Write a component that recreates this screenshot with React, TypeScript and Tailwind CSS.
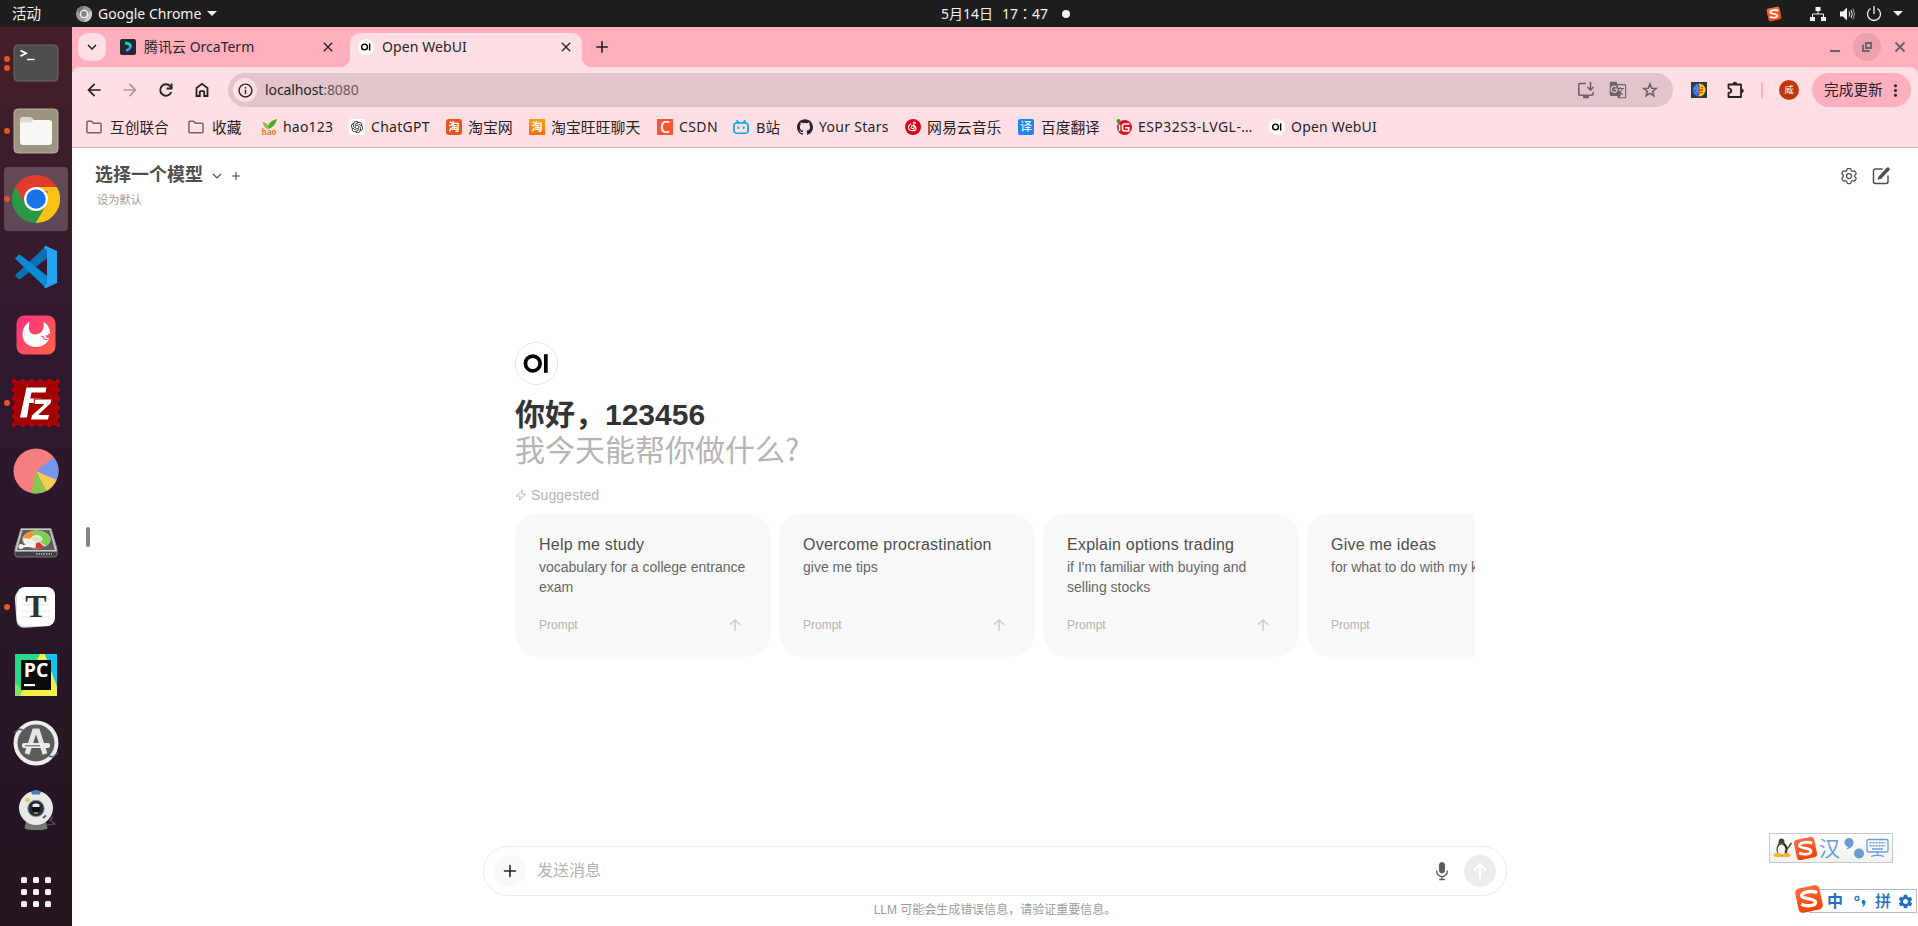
import type { ReactNode } from "react";
import {
  MdArrowBack,
  MdArrowForward,
  MdInfoOutline,
  MdGTranslate,
  MdMoreVert,
  MdClose,
  MdAdd,
  MdKeyboardArrowDown,
  MdSettings,
} from "react-icons/md";
import { SiOpenai, SiGithub, SiBilibili } from "react-icons/si";
import { HiOutlineCog6Tooth } from "react-icons/hi2";

const UI = "font-['Noto_Sans','Noto_Sans_CJK_SC',sans-serif]";

/* ---------- shared marks ---------- */

function OiMark({ className }: { className: string }) {
  return (
    <svg viewBox="0 0 44 44" className={className}>
      <circle cx="22" cy="22" r="22" fill="#fff" />
      <circle cx="18" cy="22" r="7.900" fill="none" stroke="#000" strokeWidth="4" />
      <rect x="30" y="12" width="4" height="20" fill="#000" />
    </svg>
  );
}

function SogouMark({ className }: { className: string }) {
  return (
    <svg viewBox="0 0 28 28" className={className}>
      <defs>
        <linearGradient id="sogou" x1="0" y1="0" x2="0" y2="1">
          <stop offset="0" stopColor="#ff6a3c" />
          <stop offset="1" stopColor="#f04208" />
        </linearGradient>
      </defs>
      <rect x="2.500" y="2.500" width="23" height="23" rx="4" fill="url(#sogou)" transform="rotate(-12 14 14)" />
      <path
        d="M21.500 8.200C17 6 8 7 7.200 10.600c-.7 3.600 12.800 2.400 12.900 6.400 0 3.600-9 4.400-13.300 1.800"
        fill="none"
        stroke="#fff"
        strokeWidth="3.200"
      />
    </svg>
  );
}

/* ---------- dock ---------- */

const terminalIcon = (
  <>
    <rect x="2" y="6" width="44" height="36" rx="4" fill="#4d4d4c" stroke="#6b6b69" />
    <path d="M8.500 11.500l5.500 2.800-5.500 2.800" fill="none" stroke="#fff" strokeWidth="1.800" />
    <path d="M15 20.500h7.500" stroke="#fff" strokeWidth="1.500" />
  </>
);

const filesIcon = (
  <>
    <rect x="2" y="2" width="44" height="44" rx="4" fill="#9c9480" stroke="#b8b09c" />
    <path d="M8 18v-6q0-2 2-2h8q1.500 0 2.500 1.500L22 13v6z" fill="#dedad0" />
    <path d="M8 15.500h11l2.500-2.500H37q3 0 3 3v19q0 3-3 3H11q-3 0-3-3z" fill="#f8f7f5" />
  </>
);

const chromeIcon = (
  <>
    <path d="M24 24L3.200 12A24 24 0 0 1 44.800 12z" fill="#e33b2e" />
    <path d="M24 24L44.800 12A24 24 0 0 1 24 48z" fill="#fbc116" />
    <path d="M24 24L24 48A24 24 0 0 1 3.200 12z" fill="#2a9a49" />
    <path d="M24 12h20.800l-6 6z" fill="#fbc116" />
    <path d="M34.400 30L24 48l-6-14z" fill="#2a9a49" />
    <path d="M34.400 30L24 48h2l14-12z" fill="#fbc116" />
    <path d="M13.600 30L3.200 12l12-2z" fill="#e33b2e" />
    <path d="M3.200 12l10.400 18-8-4z" fill="#2a9a49" />
    <circle cx="24" cy="24" r="12" fill="#fff" />
    <circle cx="24" cy="24" r="9.700" fill="#1a73e8" />
  </>
);

const vscodeIcon = (
  <>
    <path d="M3 32.500l3.500 3.500q1 .8 2 0L36 14.500 34 3z" fill="#0b6fb8" />
    <path d="M3 15.500l3.500-3.500q1-.8 2 0L36 33.500 34 45z" fill="#0a8bd8" />
    <path d="M34 3l11 5v32l-11 5q-1 .3-2-1l3-4V8l-3-4q1-1.300 2-1z" fill="#23a5f1" />
  </>
);

const crabIcon = (
  <>
    <defs>
      <linearGradient id="crab" x1="0" y1="0" x2="1" y2="1">
        <stop offset="0" stopColor="#ff2f83" />
        <stop offset="1" stopColor="#fb6444" />
      </linearGradient>
    </defs>
    <rect x="4.500" y="4.500" width="39" height="39" rx="8" fill="url(#crab)" />
    <path
      d="M17.500 11c-2 9 1 12.500 5.500 12.500s10-3.500 8.500-12.500c4 2 6.500 6 6.500 12l-2.500-.5 1 2-3-.5 1 2.500 2.500 1c-2 5.500-7 8.500-13.500 8.500s-13-5-13-12c0-6.500 3-11 7-13z"
      fill="#fff"
    />
    <path d="M29 25l3 1-.5 2 4 .5" fill="none" stroke="#f9476b" strokeWidth="1" />
  </>
);

const filezillaIcon = (
  <>
    <rect x="2" y="2" width="44" height="44" fill="#a30000" />
    <rect x="2" y="2" width="44" height="44" fill="none" stroke="#b50000" strokeWidth="4.500" strokeDasharray="0.100 8.700" strokeLinecap="round" />
    <path d="M14.500 8.500h20l-1 5H19.500l-1.200 6h11l-1 4.500h-11L15 38.500H8z" fill="#fff" />
    <path d="M22.500 20h17.500l-1 4.500-12 11h10.500l-1 5.500H18.500l1-4.500 12-11h-9.500z" fill="#fff" stroke="#9a0000" strokeWidth="1" />
  </>
);

const pieIcon = (
  <>
    <circle cx="24" cy="24" r="22.500" fill="#f67e7e" />
    <path d="M24 24L42 10.500A22.500 22.500 0 0 1 44.500 33z" fill="#7397ee" />
    <path d="M24 24L44.500 33A22.500 22.500 0 0 1 34.500 44z" fill="#f7cc52" />
    <path d="M24 24L34.500 44A22.500 22.500 0 0 1 19 46z" fill="#8bc551" />
  </>
);

const diskIcon = (
  <g transform="translate(0 7.500)">
    <path d="M9 6h30l6 20.500q.5 4.500-2 4.500H5q-2.500 0-2-4.500z" fill="#cfcfca" stroke="#8a8a86" />
    <path d="M10.500 7.500h27l5.500 20H5z" fill="#5c5f60" />
    <path d="M3 29h42v3q0 2.500-3 2.500H6q-3 0-3-2.500z" fill="#3f4243" stroke="#8c8f90" strokeWidth=".8" />
    <ellipse cx="24.500" cy="17" rx="14" ry="9" fill="#efefec" stroke="#999" strokeWidth=".8" />
    <path d="M24.500 17L20 8.500a14 9 0 0 1 14 15z" fill="#82cf4e" />
    <path d="M24.500 17L20 8.500q-7 2-9 7z" fill="#f8922c" />
    <path d="M24.500 17l8 7.500q-4 2-9 1.500z" fill="#dc2f36" />
    <ellipse cx="24.500" cy="16.500" rx="5.500" ry="3.300" fill="#cfe9bd" stroke="#fff" />
    <circle cx="9" cy="24" r="2.500" fill="#f2f2f2" />
    <path d="M9 24l13-1" stroke="#fff" strokeWidth="1.800" />
    <path d="M24 31.500h16" stroke="#9b9e9f" strokeWidth="2" strokeDasharray="1.500 1" />
  </g>
);

const typoraIcon = (
  <>
    <rect x="3.500" y="6" width="38" height="38" rx="8" fill="#ddd" transform="rotate(-4 24 24)" />
    <rect x="5" y="4" width="38" height="39" rx="8" fill="#fff" />
    <path d="M10 16h28M10 22h28M10 28h28M10 34h28" stroke="#e6e6e6" strokeWidth="1.200" />
    <text x="24" y="34" textAnchor="middle" fontFamily="Liberation Serif" fontWeight="700" fontSize="32" fill="#2f3336">
      T
    </text>
  </>
);

const pycharmIcon = (
  <>
    <rect x="3" y="3" width="42" height="42" fill="#27d889" />
    <path d="M3 31l12 14H3z" fill="#7be35c" />
    <path d="M31 3h14v30L34 20z" fill="#13c5ec" />
    <path d="M28 3h5l12 32v10H8z" fill="#f4ee45" />
    <path d="M33 3h12v32z" fill="#13c5ec" />
    <rect x="9" y="9" width="30" height="30" fill="#0b0b0b" />
    <text x="24" y="26" textAnchor="middle" fontFamily="Open Sans" fontWeight="700" fontSize="19.500" fill="#fff">
      PC
    </text>
    <rect x="12" y="33" width="11" height="2.200" fill="#fff" />
  </>
);

const softwareIcon = (
  <>
    <circle cx="24" cy="24" r="20.500" fill="#5b5b5b" stroke="#ececec" strokeWidth="4" />
    <path d="M2 14l5-4 4 1M46 34l-5 4-4-1" stroke="#5b5b5b" strokeWidth="1.500" fill="none" />
    <path d="M15 35l7.500-23h3L33 35" fill="none" stroke="#e6e6e6" strokeWidth="5" />
    <rect x="10" y="24" width="28" height="5" rx="2" fill="#ececec" />
    <path d="M13 26.800h15" stroke="#6a4a68" strokeWidth="1" />
  </>
);

const webcamIcon = (
  <g transform="translate(0 -2)">
    <path d="M14 37h20l1.500 6q-1 2-11.500 2t-11.500-2z" fill="#74787a" />
    <path d="M34 40l9-1-5-4 3-3" stroke="#55585a" strokeWidth="1.200" fill="none" />
    <circle cx="24" cy="23" r="17" fill="#e9e9e9" />
    <path d="M19 6.500q5-3 10 0l-1 3h-8z" fill="#4a7cc2" />
    <circle cx="15.500" cy="15" r="2.300" fill="#d2db2e" />
    <circle cx="24" cy="23.500" r="8.200" fill="#232c38" stroke="#8a929b" strokeWidth="1" />
    <circle cx="24" cy="23.500" r="4" fill="#0b0d11" />
    <path d="M20.500 19.500q3.500-2 7 0v2.500h-7z" fill="#e9edf2" />
    <path d="M22 28h4" stroke="#b8a83a" strokeWidth="1.500" />
    <path d="M31 33l3-2.500" stroke="#555" strokeWidth="1.800" />
  </g>
);

const DOCK: { icon: ReactNode; dots: number; active?: boolean }[] = [
  { icon: terminalIcon, dots: 2 },
  { icon: filesIcon, dots: 1 },
  { icon: chromeIcon, dots: 1, active: true },
  { icon: vscodeIcon, dots: 0 },
  { icon: crabIcon, dots: 0 },
  { icon: filezillaIcon, dots: 1 },
  { icon: pieIcon, dots: 0 },
  { icon: diskIcon, dots: 0 },
  { icon: typoraIcon, dots: 1 },
  { icon: pycharmIcon, dots: 0 },
  { icon: softwareIcon, dots: 0 },
  { icon: webcamIcon, dots: 0 },
];

function Dock() {
  return (
    <nav className="flex h-full w-[72px] shrink-0 flex-col items-center bg-linear-to-b from-[#451f28] via-[#2f182e] via-35% to-[#241520] pt-0.5">
      {DOCK.map((item, i) => (
        <div key={i} className="flex h-[68px] w-full shrink-0 items-center">
          <div className="z-10 flex w-3 flex-col items-end gap-[3px] pr-0.5">
            {Array.from({ length: item.dots }, (_, d) => (
              <span key={d} className="size-1.5 rounded-full bg-[#e95420]" />
            ))}
          </div>
          <div
            className={
              item.active
                ? "-ml-2 flex size-16 items-center justify-center rounded bg-white/20"
                : "-ml-2 flex size-16 items-center justify-center"
            }
          >
            <svg viewBox="0 0 48 48" className="size-12">
              {item.icon}
            </svg>
          </div>
        </div>
      ))}
      <div className="mt-8 grid grid-cols-3 gap-1.5">
        {Array.from({ length: 9 }, (_, i) => (
          <span key={i} className="size-1.5 rounded-[1.5px] bg-[#f2f0f2]" />
        ))}
      </div>
    </nav>
  );
}

/* ---------- system bar ---------- */

function TopBar() {
  return (
    <header className="relative flex h-[27px] shrink-0 items-center bg-[#1d1d1d] text-[14.500px] text-[#f2f2f2]">
      <span className="w-[63px] pl-3">活动</span>
      <svg viewBox="0 0 16 16" className="ml-[13px] size-4">
        <circle cx="8" cy="8" r="8" fill="#9b9b9b" />
        <path d="M8 0a8 8 0 0 0-7 4l4 6z" fill="#777" />
        <path d="M15 4a8 8 0 0 1-7 12l3-6z" fill="#c9c9c9" />
        <circle cx="8" cy="8" r="3.600" fill="#858585" stroke="#f4f4f4" strokeWidth="1.400" />
      </svg>
      <span className="ml-1.5 w-[109px] text-[14px] whitespace-nowrap">Google Chrome</span>
      <svg viewBox="0 0 10 5" className="h-[5px] w-[10px]">
        <path d="M0 0h10L5 5z" fill="#f2f2f2" />
      </svg>
      <div className="absolute inset-y-0 left-[941px] flex items-center">
        <span className="flex w-[121px] items-center text-[14px]">
          <span className="w-[61px] whitespace-nowrap">5月14日</span>
          <span className="whitespace-nowrap">17</span>
          <span className="w-[14px] font-['Noto_Sans_CJK_TC']">：</span>
          <span>47</span>
        </span>
        <span className="size-2 rounded-full bg-[#f2f2f2]" />
      </div>
      <div className="ml-auto flex items-center pr-[15px]">
        <SogouMark className="mr-[28px] size-4" />
        <svg viewBox="0 0 16 16" className="mr-[13px] size-4" fill="#f2f2f2">
          <path d="M5.500 1h5v4h-5zM0 11h5v4H0zM11 11h5v4h-5z" />
          <path d="M8 5v3M2.500 11V8h11v3" fill="none" stroke="#f2f2f2" />
        </svg>
        <svg viewBox="0 0 16 16" className="mr-[11px] size-4" fill="#f2f2f2">
          <path d="M1 5.500h3L8 1.500v13L4 10.500H1z" />
          <path d="M10 5.500q1.500 2.500 0 5M12 4q2.500 4 0 8" fill="none" stroke="#f2f2f2" />
          <path d="M14 2.500q3 5.500 0 11" fill="none" stroke="#999" />
        </svg>
        <svg viewBox="0 0 16 16" className="mr-[11px] size-4" fill="none" stroke="#f2f2f2" strokeWidth="1.300">
          <path d="M8 0v8M4.500 2.500a6.500 6.500 0 1 0 7 0" />
        </svg>
        <svg viewBox="0 0 10 5" className="h-[5px] w-[10px]">
          <path d="M0 0h10L5 5z" fill="#f2f2f2" />
        </svg>
      </div>
    </header>
  );
}

/* ---------- browser chrome ---------- */

function TabStrip() {
  return (
    <div className="flex h-10 items-center bg-[#ffafbd] pl-1.5 text-[14px] text-[#262326]">
      <div className="flex size-7 items-center justify-center rounded-[10px] bg-[#ffdfe4]">
        <MdKeyboardArrowDown className="size-[18px]" />
      </div>
      <div className="flex h-[34px] w-[244px] items-center pl-3.5">
        <svg viewBox="0 0 16 16" className="size-4">
          <rect width="16" height="16" rx="2" fill="#24292f" />
          <path d="M5 4q6 .5 5.500 4" fill="none" stroke="#16d7a6" strokeWidth="2.800" />
          <path d="M10.500 7.500q-1 3.500-4.500 4" fill="none" stroke="#5d8bf5" strokeWidth="2.500" />
        </svg>
        <span className="ml-2 w-[176px] pb-0.5 whitespace-nowrap">腾讯云 OrcaTerm</span>
        <MdClose className="size-4 shrink-0" />
      </div>
      <div className="relative mt-1.5 flex h-[34px] w-[232px] items-center rounded-t-[10px] bg-[#ffdfe4] pl-2">
        <span className="absolute bottom-0 -left-2.5 size-2.5 bg-[radial-gradient(circle_at_0_0,transparent_10px,#ffdfe4_10.500px)]" />
        <span className="absolute -right-2.5 bottom-0 size-2.5 bg-[radial-gradient(circle_at_100%_0,transparent_10px,#ffdfe4_10.500px)]" />
        <div className="-mt-1.5 flex items-center">
          <OiMark className="size-4" />
          <span className="ml-2 w-[176px] pb-0.5 tracking-[0.100px] whitespace-nowrap">Open WebUI</span>
          <MdClose className="size-4 shrink-0" />
        </div>
      </div>
      <MdAdd className="ml-2.5 size-5" />
      <div className="ml-auto flex items-center pr-[10px] text-[#6b6266]">
        <span className="mt-2 mr-[13px] h-0.5 w-2.5 bg-[#6b6266]" />
        <div className="mr-[11px] flex size-7 items-center justify-center rounded-full bg-[#eba1ae]">
          <svg viewBox="0 0 10 10" className="size-2.5" fill="none" stroke="#6b6266" strokeWidth="1.800">
            <path d="M4 1h5v5H4zM1 2.500V9h6.500" />
          </svg>
        </div>
        <svg viewBox="0 0 16 16" className="size-4" stroke="currentColor" strokeWidth="1.900">
          <path d="M3.500 3.500l9 9M12.500 3.500l-9 9" />
        </svg>
      </div>
    </div>
  );
}

function Toolbar() {
  return (
    <div className="bg-[#ffafbd]">
      <div className="flex h-[46px] items-center rounded-t-lg bg-[#ffdfe4] pr-[7px] pl-3 text-[#262326]">
        <MdArrowBack className="size-5" />
        <MdArrowForward className="ml-4 size-5 text-[#a8949a]" />
        <svg viewBox="0 0 20 20" className="ml-4 size-5" fill="none" stroke="currentColor" strokeWidth="1.900">
          <path d="M15.300 12A5.700 5.700 0 1 1 14.300 6.300L16 8" />
          <path d="M15.500 3.500v5h-5" />
        </svg>
        <svg viewBox="0 0 20 20" className="ml-4 size-5" fill="none" stroke="currentColor" strokeWidth="1.800">
          <path d="M4.500 16V8L10 3.800 15.500 8v8h-3.300v-4q0-.8-.8-.8H8.600q-.8 0-.8.8v4z" />
        </svg>
        <div className="ml-4 flex h-[34px] w-[1445px] items-center rounded-full bg-[#e1c5ca] pr-3.5 pl-[5px] text-[14px]">
          <span className="flex size-6 items-center justify-center rounded-full bg-[#ffdfe4]">
            <MdInfoOutline className="size-[17px]" />
          </span>
          <span className="ml-2 pb-0.5 tracking-[-0.100px]">
            localhost<span className="text-[#675a5e]">:8080</span>
          </span>
          <div className="ml-auto flex items-center gap-3.5 text-[#6f6367]">
            <svg viewBox="0 0 18 18" className="size-[18px]" fill="none" stroke="currentColor" strokeWidth="1.600">
              <path d="M9 2.500H3q-1.200 0-1.200 1.200V13q0 1.200 1.200 1.200h12q1.200 0 1.200-1.200v-2" />
              <path d="M13.500 1v7.500M10.500 6l3 3 3-3" />
              <path d="M6 16h6" strokeWidth="2.500" />
            </svg>
            <MdGTranslate className="size-[18px]" />
            <svg viewBox="0 0 18 18" className="size-[18px]" fill="none" stroke="currentColor" strokeWidth="1.600">
              <path d="M9 3l1.700 4.200 4.500.3-3.500 2.900 1.200 4.400L9 12.400l-3.900 2.400 1.200-4.400-3.500-2.900 4.500-.3z" />
            </svg>
          </div>
        </div>
        <svg viewBox="0 0 16 16" className="ml-[18px] size-4">
          <rect width="16" height="16" fill="#38363c" />
          <path d="M8 1.500a6.500 6.500 0 0 0 0 13z" fill="#2374ee" />
          <path d="M8 1.500a6.500 6.500 0 0 1 0 13z" fill="#f7d21c" />
          <path d="M3 6l5 2M4 11l4-3M5 3l3 5" stroke="#5fd0ff" strokeWidth=".7" />
          <path d="M8 3v10M8 8h4M10 5l2 1M9 10l3 1" stroke="#e03a2a" strokeWidth="1.300" />
        </svg>
        <svg viewBox="0 0 20 20" className="ml-[18px] size-5" fill="none" stroke="currentColor" strokeWidth="1.800">
          <path d="M3.500 4.500H16V17H3.500v-4q2.800-.3 2.800-2.300T3.500 8.300z" strokeLinejoin="round" />
          <path d="M7.800 4.200a2.100 2.200 0 0 1 4.200 0zM16.300 8.700a2.200 2.100 0 0 1 0 4.200z" fill="currentColor" strokeWidth=".6" />
        </svg>
        <span className="ml-4 h-4 w-0.5 bg-[#ffafbd]" />
        <span className="ml-4 flex size-5 items-center justify-center rounded-full bg-[#bf360c] text-[9px] text-white">威</span>
        <div className="ml-auto flex h-[34px] w-[99px] items-center rounded-full bg-[#ffafbd] pl-3 text-[14.700px] whitespace-nowrap">
          <span className="pb-px">完成更新</span>
          <MdMoreVert className="ml-[3px] size-[19px] shrink-0" />
        </div>
      </div>
    </div>
  );
}

const folder = (
  <svg viewBox="0 0 17 14" className="h-3.5 w-[17px]" fill="none" stroke="#6f6367" strokeWidth="1.600" strokeLinejoin="round">
    <path d="M1 2q0-1 1-1h4l2 2h7q1 0 1 1v8q0 1-1 1H2q-1 0-1-1z" />
  </svg>
);

function TileGlyph({ className, children }: { className: string; children: ReactNode }) {
  return <span className={className}>{children}</span>;
}

const BOOKMARKS: { icon: ReactNode; label: string; cell: string; text: string }[] = [
  { icon: folder, label: "互创联合", cell: "w-[102px]", text: "text-[14.700px] pl-2" },
  { icon: folder, label: "收藏", cell: "w-[73px]", text: "text-[14.700px] pl-2" },
  {
    icon: (
      <svg viewBox="0 0 16 16" className="size-4">
        <path d="M2 3.500q3.500 0 5 3.500 2-5.500 9-7-1 6.500-8 10Q3 9 2 3.500z" fill="#4faa2f" />
        <path d="M2 3.500q3.500 0 5 3.500l1 3Q3 9 2 3.500z" fill="#8bc53f" />
        <text x="8" y="15.500" textAnchor="middle" fontFamily="Open Sans" fontWeight="700" fontSize="8" fill="#f07a1d">
          hao
        </text>
      </svg>
    ),
    label: "hao123",
    cell: "w-[88px]",
    text: "pl-1.5 tracking-[0.200px]",
  },
  {
    icon: (
      <span className="flex size-4 items-center justify-center rounded-xs bg-white">
        <SiOpenai className="size-3" />
      </span>
    ),
    label: "ChatGPT",
    cell: "w-[97px]",
    text: "pl-1.5 tracking-[0.300px]",
  },
  {
    icon: <TileGlyph className="flex size-4 items-center justify-center rounded-[3px] bg-[#e8561d] text-[11px] font-bold text-white">淘</TileGlyph>,
    label: "淘宝网",
    cell: "w-[83px]",
    text: "text-[14.900px] pl-1.5",
  },
  {
    icon: <TileGlyph className="flex size-4 items-center justify-center bg-linear-to-b from-[#ffa00f] to-[#ff6a00] text-[11px] font-bold text-white">淘</TileGlyph>,
    label: "淘宝旺旺聊天",
    cell: "w-[128px]",
    text: "text-[14.900px] pl-1.5",
  },
  {
    icon: <TileGlyph className="flex size-4 items-center justify-center bg-[#fc5531] text-[16px] font-medium text-white">C</TileGlyph>,
    label: "CSDN",
    cell: "w-[76px]",
    text: "pl-1.5 tracking-[0.400px]",
  },
  { icon: <SiBilibili className="size-4 text-[#13a7dc]" />, label: "B站", cell: "w-16", text: "pl-[7px] text-[14.500px]" },
  { icon: <SiGithub className="size-4 text-[#24292f]" />, label: "Your Stars", cell: "w-[108px]", text: "pl-1.5 tracking-[0.300px]" },
  {
    icon: (
      <svg viewBox="0 0 16 16" className="size-4" fill="none" stroke="#fff" strokeWidth="1.200" strokeLinecap="round">
        <circle cx="8" cy="8" r="8" fill="#dd001b" stroke="none" />
        <path d="M10.500 4q-1.500-1.300-2 0l.8 4.300a1.500 1.500 0 1 1-1.500-1.600c4-.6 4.200 4.800.2 5C4.800 12 3.200 9.800 3.500 7.700 3.700 6.500 4.500 5.600 5.800 5" />
      </svg>
    ),
    label: "网易云音乐",
    cell: "w-[113px]",
    text: "text-[14.900px] pl-1.5",
  },
  {
    icon: <TileGlyph className="flex size-4 items-center justify-center rounded-[2px] bg-[#1c86f8] text-[12px] text-white">译</TileGlyph>,
    label: "百度翻译",
    cell: "w-[98px]",
    text: "text-[14.700px] pl-[7px]",
  },
  {
    icon: (
      <svg viewBox="0 0 16 16" className="size-4">
        <circle cx="8.500" cy="8.500" r="7.500" fill="#d8121c" />
        <circle cx="2.500" cy="2" r="2" fill="#19a91d" />
        <path d="M13.500 5H8.500Q6.500 5 6.500 7v3q0 2 2 2h4.200V8.700H9M3.500 5.500V12" fill="none" stroke="#fff" strokeWidth="1.600" />
      </svg>
    ),
    label: "ESP32S3-LVGL-…",
    cell: "w-[153px]",
    text: "pl-1.5 tracking-[0.450px]",
  },
  { icon: <OiMark className="size-4" />, label: "Open WebUI", cell: "w-[120px]", text: "pl-1.5 tracking-[0.200px]" },
];

function BookmarksBar() {
  return (
    <div className="flex h-[35px] items-center border-b border-[#c9b3b8] bg-[#ffdfe4] pb-[7px] pl-3.5 text-[14px] text-[#262326]">
      {BOOKMARKS.map((b, i) => (
        <div key={i} className={`flex h-5 shrink-0 items-center leading-5 ${b.cell}`}>
          <span className="flex size-4 shrink-0 items-center justify-center">{b.icon}</span>
          <span className={`whitespace-nowrap ${b.text}`}>{b.label}</span>
        </div>
      ))}
    </div>
  );
}

/* ---------- page ---------- */

const PROMPTS = [
  { title: "Help me study", text: "vocabulary for a college entrance exam" },
  { title: "Overcome procrastination", text: "give me tips" },
  { title: "Explain options trading", text: "if I'm familiar with buying and selling stocks" },
  { title: "Give me ideas", text: "for what to do with my kids' art" },
];

function ArrowUp({ className }: { className: string }) {
  return (
    <svg viewBox="0 0 16 16" className={className} fill="currentColor">
      <path d="M8 14a.75.75 0 0 1-.75-.75V4.560L4.030 7.780a.75.75 0 0 1-1.060-1.060l4.500-4.500a.75.75 0 0 1 1.060 0l4.500 4.500a.75.75 0 0 1-1.060 1.060L8.750 4.560v8.690A.75.75 0 0 1 8 14Z" />
    </svg>
  );
}

function PageHeader() {
  return (
    <div className="flex h-[60px] justify-between pt-3.5 pr-[27px] pl-[23px] text-[#4e4e4e]">
      <div>
        <div className="flex h-[27px] items-center text-[18px] font-bold">
          选择一个模型
          <svg viewBox="0 0 12 12" className="ml-2 mt-px size-3" fill="none" stroke="currentColor" strokeWidth="1.200">
            <path d="M2 4l4 4 4-4" />
          </svg>
          <svg viewBox="0 0 12 12" className="ml-[7px] mt-px size-3" fill="none" stroke="currentColor" strokeWidth="1.100">
            <path d="M6 2v8M2 6h8" />
          </svg>
        </div>
        <div className="mt-[3px] ml-0.5 text-[11.200px] leading-4 text-[#9b9b9b]">设为默认</div>
      </div>
      <div className="flex h-7 items-center gap-3">
        <HiOutlineCog6Tooth className="size-5" />
        <svg viewBox="0 0 20 20" className="size-5" fill="none" stroke="currentColor">
          <path d="M11 3H4.500Q2.500 3 2.500 5v10.500q0 2 2 2H15q2 0 2-2V10" strokeWidth="1.500" strokeLinecap="round" />
          <path d="M17 3l-7.800 8.300" strokeWidth="3.400" strokeLinecap="round" />
          <path d="M8.400 9.700L6.800 13.600l3.900-1.500z" fill="currentColor" strokeWidth=".5" />
        </svg>
      </div>
    </div>
  );
}

function Welcome() {
  return (
    <section className="ml-[443px] w-[960px]">
      <div className="flex size-[43px] items-center justify-center rounded-full border border-[#e3e3e3]">
        <OiMark className="size-[41px]" />
      </div>
      <h1 className="mt-3 h-9 text-[30px] leading-9 font-bold text-[#333]">你好，123456</h1>
      <p className="h-9 text-[30px] leading-9 text-[#b4b4b4]">
        我今天能帮你做什么<span className="font-['Noto_Sans_CJK_SC',sans-serif] leading-none">?</span>
      </p>
      <div className="mt-4 flex h-5 items-center text-[14px] tracking-[0.150px] text-[#b4b4b4]">
        <svg viewBox="0 0 12 12" className="mr-1 size-3" fill="none" stroke="currentColor" strokeWidth=".9" strokeLinejoin="round">
          <path d="M7.500 1L1.200 7h4L4.500 11l6.300-6h-4z" />
        </svg>
        Suggested
      </div>
      <div className="mt-2 flex gap-2 overflow-hidden">
        {PROMPTS.map((p) => (
          <article key={p.title} className="flex h-36 w-64 shrink-0 flex-col rounded-3xl bg-[#f9f9f9] px-6 pt-5 pb-5">
            <h2 className="text-[16px] leading-6 tracking-[0.230px] text-[#4e4e4e]">{p.title}</h2>
            <p className="text-[14px] leading-5 text-[#676767]">{p.text}</p>
            <div className="mt-auto flex h-6 items-center justify-between pr-1 text-[12px] text-[#b4b4b4]">
              Prompt
              <ArrowUp className="size-4 text-[#cdcdcd]" />
            </div>
          </article>
        ))}
      </div>
    </section>
  );
}

function Composer() {
  return (
    <div className="ml-[411px] w-[1024px]">
      <div className="flex h-[50px] items-center rounded-full border border-[#ececec] pr-2.5 pl-2.5">
        <span className="flex size-8 items-center justify-center rounded-full bg-[#f9f9f9] text-[#262626]">
          <svg viewBox="0 0 16 16" className="size-4" stroke="currentColor" strokeWidth="1.600" strokeLinecap="round">
            <path d="M8 2.500v11M2.500 8h11" />
          </svg>
        </span>
        <span className="ml-[11px] pb-px text-[16px] text-[#b4b4b4]">发送消息</span>
        <svg viewBox="0 0 20 20" className="ml-auto mr-3 size-5" fill="none" stroke="#5d5d5d">
          <rect x="7.500" y="1.500" width="5" height="10.500" rx="2.500" fill="#5d5d5d" />
          <path d="M4.700 9.500v.8a5.300 5.300 0 0 0 10.600 0v-.8M10 15.500v3M7.200 18.500h5.600" strokeWidth="1.400" />
        </svg>
        <span className="flex size-8 items-center justify-center rounded-full bg-[#ececec] text-white">
          <ArrowUp className="size-5" />
        </span>
      </div>
      <div className="mt-[5px] text-center text-[12px] leading-[18px] text-[#9b9b9b]">LLM 可能会生成错误信息，请验证重要信息。</div>
    </div>
  );
}

/* ---------- input method panels ---------- */

function Penguin() {
  return (
    <svg viewBox="0 0 20 20" className="size-5">
      <ellipse cx="9" cy="11.500" rx="5.500" ry="7" fill="#26262c" />
      <ellipse cx="8.500" cy="4.500" rx="3" ry="4" fill="#3a3a42" />
      <ellipse cx="8.500" cy="12" rx="4" ry="5.500" fill="#f4f4f4" />
      <path d="M6.500 5l2 1 2-1-2 2z" fill="#f2b41f" />
      <ellipse cx="4.500" cy="17" rx="4" ry="2" fill="#f6b81b" />
      <ellipse cx="13.500" cy="17" rx="4" ry="2" fill="#f6b81b" />
      <path d="M12 14l6.500-9" stroke="#5b4635" strokeWidth="1.500" />
    </svg>
  );
}

function InputPanels() {
  return (
    <>
      <div className="absolute top-[833px] left-[1769px] flex h-[30px] w-[124px] items-center border border-[#c8c8c8] bg-linear-to-b from-white to-[#f1f1f1] pl-[3px] text-[#6a9bd1]">
        <Penguin />
        <SogouMark className="size-[25px]" />
        <span className="ml-px text-[21px] leading-6">汉</span>
        <svg viewBox="0 0 22 22" className="ml-[3px] size-[22px]" fill="currentColor">
          <circle cx="6" cy="5.500" r="4.500" />
          <path d="M10.500 5q0 6-7.500 7.500 3-2 3-5z" />
          <circle cx="16" cy="16.500" r="5" />
        </svg>
        <svg viewBox="0 0 23 20" className="ml-px h-5 w-[23px]" fill="none" stroke="currentColor" strokeWidth="1.300">
          <rect x="1" y="1.500" width="21" height="12.500" rx="1.500" />
          <path d="M3.500 4.700h16M3.500 7.700h16" strokeDasharray="2 1" strokeWidth="1.600" />
          <path d="M6 11h11M11.500 14v3M5 18.500q6-2.500 13 0" />
        </svg>
      </div>
      <div className="absolute top-[889px] left-[1809px] flex h-6 w-[108px] items-center border border-[#b9bac8] bg-white text-[#1f6fc4]">
        <SogouMark className="-mt-[5px] -ml-[16px] size-[30px] shrink-0" />
        <span className="ml-[3px] text-[16px] leading-5 font-bold">中</span>
        <svg viewBox="0 0 14 14" className="ml-[10px] size-3.5" fill="currentColor">
          <circle cx="4" cy="4.500" r="2" fill="none" stroke="currentColor" strokeWidth="1.300" />
          <circle cx="10.500" cy="8" r="1.900" />
          <path d="M12.400 8q0 4-3.400 5 1.500-2 1.500-4z" />
        </svg>
        <span className="ml-[8px] text-[16px] leading-5 font-medium">拼</span>
        <MdSettings className="ml-[6px] size-[17px] shrink-0" />
      </div>
    </>
  );
}

export default function App() {
  return (
    <div className={`relative flex h-[926px] w-[1918px] flex-col overflow-hidden bg-white ${UI}`}>
      <TopBar />
      <div className="flex min-h-0 flex-1">
        <Dock />
        <div className="flex min-w-0 flex-1 flex-col">
          <TabStrip />
          <Toolbar />
          <BookmarksBar />
          <main className="flex flex-1 flex-col font-['Liberation_Sans','Noto_Sans_CJK_SC',sans-serif]">
            <PageHeader />
            <div className="flex flex-1 flex-col pt-[134px]">
              <Welcome />
              <div className="mt-auto mb-[7px]">
                <Composer />
              </div>
            </div>
          </main>
        </div>
      </div>
      <span className="absolute top-[527px] left-[86px] h-5 w-1 rounded-full bg-[#828282]" />
      <InputPanels />
    </div>
  );
}
